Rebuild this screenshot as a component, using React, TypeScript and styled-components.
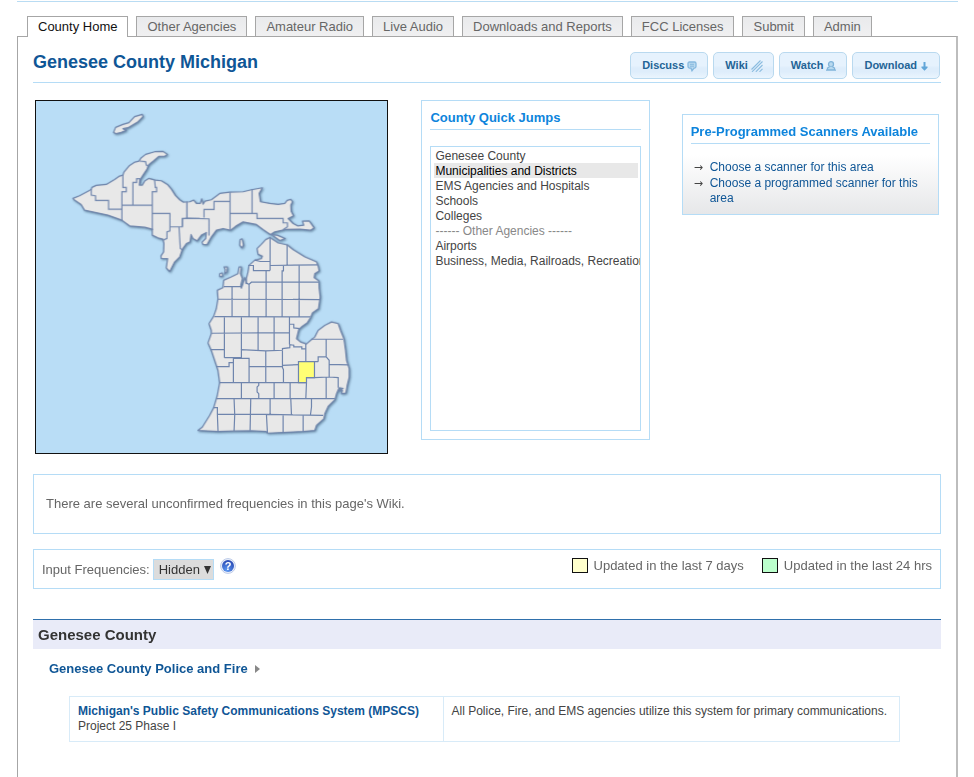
import React from "react";
import styled, { createGlobalStyle } from "styled-components";

const GlobalStyle = createGlobalStyle`
  * { box-sizing: border-box; }
  body {
    margin: 0;
    background: #fff;
    color: #666;
    font: 13px/15px "Liberation Sans", Arial, sans-serif;
  }
  h1, h2, h3, p, ul { margin: 0; padding: 0; }
  a { color: #0f5696; text-decoration: none; }
`;

const Page = styled.div`
  margin: 0 16px 0 17px;
  padding-top: 1px;
`;

const TopRule = styled.div`
  height: 1px;
  background: #b9dcf3;
`;

const Tabs = styled.nav`
  display: flex;
  gap: 8px;
  margin-top: 14px;
  padding-left: 10px;
`;

const Tab = styled.a<{ $active?: boolean }>`
  height: ${(p) => (p.$active ? "21px" : "20px")};
  padding: 2px 10px 0;
  border: 1px solid #a6a6a6;
  border-bottom: 0;
  white-space: nowrap;
  color: ${(p) => (p.$active ? "#111" : "#666")};
  background: ${(p) => (p.$active ? "#fff" : "linear-gradient(#e9eaec, #f0f0f1)")};
  margin-bottom: ${(p) => (p.$active ? "-1px" : "0")};
  position: relative;
  z-index: 1;
`;

const Panel = styled.main`
  min-height: calc(100vh - 36px);
  padding: 15px 15px 34px;
  border: 1px solid #a6a6a6;
  border-right: 2px solid #bdbdbd;
  border-bottom: 0;
`;

const TitleBar = styled.header`
  display: flex;
  justify-content: space-between;
  padding-bottom: 3px;
  border-bottom: 1px solid #b5dcf6;
`;

const Title = styled.h1`
  font-size: 18px;
  line-height: 21px;
  color: #0f5696;
`;

const Actions = styled.div`
  display: flex;
  gap: 5px;
  padding-right: 1px;
`;

const ActionButton = styled.button`
  display: flex;
  align-items: center;
  gap: 3px;
  height: 27px;
  padding: 0 10px 0 11px;
  border: 1px solid #b9d9ef;
  border-radius: 5px;
  background: linear-gradient(#e6f2fd 0 50%, #deedfb 60% 75%, #eaf5fe);
  color: #236496;
  font: bold 11px/13px "Liberation Sans", Arial, sans-serif;

  svg { display: block; margin-top: 1px; }
`;

const Overview = styled.div`
  display: grid;
  grid-template-columns: 353fr 229fr 257fr;
  align-items: start;
  column-gap: 32px;
  margin: 17px 2px 20px;
`;

const MapFrame = styled.div`
  border: 1px solid #111;
  background: #b9ddf6;

  svg { display: block; width: 100%; height: auto; }
`;

const Land = styled.g`
  fill: #e8e8e8;
  stroke: #6f85ab;
  stroke-width: 1.2;
  stroke-linejoin: round;
  filter: drop-shadow(1px 1px 1px rgba(50, 80, 110, 0.6));

  path { vector-effect: non-scaling-stroke; }
`;

const Lines = styled.g`
  fill: none;
  stroke: #6f85ad;
  stroke-width: 1.2;

  path { vector-effect: non-scaling-stroke; }
`;

const Box = styled.section<{ $shaded?: boolean }>`
  border: 1px solid #b5dcf6;
  padding: 8px;
  background: ${(p) => (p.$shaded ? "linear-gradient(#fff 40%, #e6e7e9)" : "#fff")};
`;

const BoxTitle = styled.h2`
  padding: 1px 0 3px;
  border-bottom: 1px solid #b5dcf6;
  font-size: 13px;
  line-height: 16px;
  color: #0d84dc;
`;

const QuickJumps = styled(Box)`
  margin-left: 1px;
`;

const ScannerBox = styled(Box)`
  margin-top: 14px;
`;

const JumpList = styled.select`
  display: block;
  width: 100%;
  height: 285px;
  margin: 16px 0 0;
  padding: 1px 2px 0 3px;
  border: 1px solid #b5dcf6;
  border-radius: 0;
  outline: 0;
  overflow: hidden;
  background: #fff;
  color: #444;
  font: 12px/15px "Liberation Sans", Arial, sans-serif;
  scrollbar-width: none;

  option {
    min-height: 15px;
    padding: 1px 1px 0;
  }
  option:disabled { color: #888; }
  option:checked { background: #e8e8e8 linear-gradient(#e8e8e8, #e8e8e8); color: #000; }
`;

const ArrowList = styled.ul`
  margin-top: 16px;
  list-style: none;
  font-size: 12px;

  li + li { margin-top: 1px; }
  li { display: flex; }
`;

const Arrow = styled.span`
  flex: 0 0 19px;
  padding-left: 3px;
  font-family: "DejaVu Sans", sans-serif;
  font-size: 11px;
  color: #444;
`;

const Notice = styled(Box)`
  padding: 21px 12px 22px;
`;

const Filters = styled(Box)`
  display: flex;
  justify-content: space-between;
  align-items: flex-start;
  margin-top: 15px;
`;

const FilterGroup = styled.div`
  display: flex;
  align-items: center;
  gap: 3px;
  padding-top: 1px;
`;

const SelectWrap = styled.span`
  display: grid;

  > * { grid-area: 1 / 1; }
  svg { justify-self: end; align-self: center; margin-right: 3px; pointer-events: none; }
`;

const FrequencySelect = styled.select`
  appearance: none;
  height: 21px;
  width: 61px;
  padding: 0 0 0 5px;
  border: 1px solid #b5dcf6;
  border-radius: 0;
  background: #dcdcdc;
  color: #333;
  font: 13px/15px "Liberation Sans", Arial, sans-serif;
`;

const HelpLink = styled.a`
  align-self: flex-start;
  margin: -1px 0 0 3px;

  svg { display: block; }
`;

const Legend = styled.ul`
  display: flex;
  gap: 18px;
  list-style: none;

  li { display: flex; align-items: center; gap: 6px; }
`;

const Swatch = styled.span<{ $color: string }>`
  width: 16px;
  height: 15px;
  border: 1px solid #111;
  background: ${(p) => p.$color};
`;

const SectionTitle = styled.h2`
  margin-top: 30px;
  padding: 5px;
  border-top: 1px solid #2f70ac;
  background: #e9ebf8;
  font-size: 15px;
  line-height: 19px;
  color: #333;
`;

const GroupTitle = styled.h3`
  display: flex;
  align-items: center;
  gap: 7px;
  margin: 12px 16px 20px;
  font-size: 13px;
  line-height: 15px;
`;

const SystemTable = styled.table`
  width: calc(100% - 77px);
  margin-left: 36px;
  border-collapse: collapse;

  td {
    padding: 7px 8px;
    border: 1px solid #d8ebf8;
    vertical-align: top;
    font-size: 12px;
    line-height: 15px;
    color: #444;
  }
  td:first-child { width: 45%; }
`;

const DiscussIcon = () => (
  <svg width="10" height="11" viewBox="0 0 10 11" fill="none" stroke="#86b9df">
    <path d="M2.5 1h5Q9 1 9 2.500v3Q9 7 7.500 7.200H7L5 9.800 4 7.200h-1.500Q1 7 1 5.500v-3Q1 1 2.500 1Z" fill="#b9d9ef" strokeWidth="1.300" />
    <path d="M3 3.300h4M3 5.200h4" />
  </svg>
);

const WikiIcon = () => (
  <svg width="12" height="12" viewBox="0 0 12 12" fill="none" stroke="#8bbcdf" strokeWidth="1.100">
    <path d="M.5 9.500 9.500.5M1 11.800 11.500 1.500M4.800 11.800 11.500 5M8.500 11.800l3-3" />
  </svg>
);

const WatchIcon = () => (
  <svg width="10" height="10" viewBox="0 0 10 10" fill="#b9d9ef" stroke="#80b4da" strokeWidth="1.300">
    <circle cx="5" cy="3.200" r="2.500" />
    <path d="M3.500 5.800 1.500 7v2h7V7l-2-1.200M0 9.200h10" />
  </svg>
);

const DownloadIcon = () => (
  <svg width="9" height="9" viewBox="0 0 9 9" fill="none" stroke="#62a6d8" strokeWidth="2">
    <path d="M4.500 0v7" />
    <path d="M1.500 4.500h6v1.200L4.500 8.800l-3-3.100Z" fill="#62a6d8" stroke="none" />
  </svg>
);

const HelpIcon = () => (
  <svg width="16" height="16" viewBox="0 0 16 16">
    <defs>
      <radialGradient id="help" cx=".4" cy=".85" r=".8">
        <stop offset="0" stopColor="#5b98f2" />
        <stop offset="1" stopColor="#2a4cb6" />
      </radialGradient>
    </defs>
    <circle cx="8" cy="8" r="7.400" fill="#eef2fb" stroke="#bccae8" />
    <circle cx="8" cy="8" r="6" fill="url(#help)" />
    <text x="8" y="12" textAnchor="middle" fontSize="11" fontWeight="bold" fill="#fff">?</text>
  </svg>
);

const MichiganMap = () => (
  <svg viewBox="36.500 101 351 352" role="img" aria-label="Map of Michigan counties">
    <Land>
      <g transform="translate(30 95) scale(.333333)">
        <path d="M130 310 150 302 185 283 187 277 200 271 230 268 255 253 270 243 280 240 283 231 300 211 316 201 328 198 335 188 348 178 375 170 400 169 413 178 406 183 387 184 372 197 357 209 352 222 340 240 331 254 329 270 338 270 345 258 357 250 377 255 395 257 413 268 425 282 437 301 450 314 460 321 480 320 492 315 500 325 512 325 516 311 520 327 526 318 545 314 570 295 600 291 640 290 665 284 698 278 688 295 692 320 720 325 745 328 765 325 772 316 783 313 788 320 783 330 784 348 791 362 775 370 790 385 803 392 822 390 818 378 838 377 853 398 842 405 810 402 765 403 735 410 722 418 700 403 680 388 640 380 618 393 602 405 580 400 560 405 545 425 532 448 520 448 517 441 528 430 530 412 515 420 502 437 490 430 484 418 481 440 470 445 458 462 450 485 435 500 420 529 410 518 414 490 395 490 394 482 402 470 403 445 400 432 385 428 368 420 368 402 345 396 300 392 277 375 235 360 165 345 155 328 135 315Z" />
      </g>
      <g transform="translate(60 100) scale(.333333)">
        <path d="M162 97 168 82 190 73 208 68 225 50 248 43 250 50 235 65 205 83 190 86 200 91 185 97 170 101Z" />
      </g>
      <g transform="translate(180 160) scale(.333333)">
        <path d="M181 238 187 236 191 255 186 263 180 255ZM276 224 292 225 316 235 300 241Z" />
      </g>
      <g transform="translate(190 230) scale(.333333)">
        <path d="M103 110 113 110 112 124 105 131 107 118ZM90 130 98 128 98 138 90 139Z" />
        <path d="M241 22 265 38 292 44 310 58 345 80 380 95 385 108 388 122 375 130 373 142 387 152 388 175 391 200 386 235 368 248 362 262 352 278 335 290 327 297 320 325 332 335 350 341 365 328 375 320 385 300 405 285 425 275 445 280 452 300 462 325 467 360 470 390 478 415 478 440 472 465 468 488 455 490 458 480 445 482 460 474 448 472 440 490 435 508 415 528 405 550 402 565 380 585 375 600 340 603 280 606 233 608 230 603 185 601 133 602 85 603 25 600 38 590 60 555 72 532 83 495 90 457 85 420 80 405 65 360 55 338 65 310 65 300 58 280 72 258 80 235 85 205 83 180 100 172 102 150 125 140 145 130 148 110 155 110 152 130 158 145 153 165 155 174 160 160 165 142 170 160 170 145 175 125 178 105 195 90 215 85 218 78 205 72 202 55 215 42 228 28Z" />
      </g>
    </Land>
    <Lines>
      <g transform="translate(60 100) scale(.333333)">
        <path d="M95 268V285L108 287V301H147V327H187M190 226V262H200V275H187V361M187 315H278M220 315V247H231V236H242V250M240 183 258 185 260 195 268 198M285 240 287 262H291V275H278V390M278 340H331V392L322 395V415L310 420M331 380H368V355H420M331 340V380M382 305V355M358 380 362 445 370 450" />
      </g>
      <g transform="translate(180 160) scale(.333333)">
        <path d="M22 125V172M8 199V176L22 174 88 176V226M73 172V148H103V124H151M151 97V210M151 160H232V175H310V188H323V200L310 208M217 88V160" />
      </g>
      <g transform="translate(190 230) scale(.333333)">
        <path d="M241 22V121M292 44V106M241 106 384 104M195 90 212 94H241M176 106H191V121H241M229 121V258M281 106V122H277V258M328 106V258M168 158 178 162 185 156H387M178 162V258M102 169H155M127 169V258M85 207 391 208M74 259 362 260M104 260V382M155 260V358M205 260V307M253 260V307M299 260V343M299 282H312V293L330 295M65 309 299 307M205 307V360M253 307V360" />
        <path d="M63 358H104M104 382H155V358L228 362 278 360V355L300 352V343L312 345V350H336V356H348V341M348 341V395M365 327H460M409 327V380M385 394V380H409L418 390V442M350 394H385M418 402 475 404M228 362V457M131 384V457M131 384H178V457M80 409H118V397H131M178 409 278 409M278 360V412L281 418V457M278 405 326 403M350 442H374L418 440 445 442V472M409 442V505M350 457 348 505M90 457H350M155 457V505M207 457V465L202 470V485L207 490V505M253 457V505M301 457V505M80 505H435M133 505 135 553 133 602M183 505 181 601M241 505V553M303 505 305 553M365 505V530L362 553M85 552 230 552 400 555M72 532H83V552L85 603M230 552 233 608M280 553V606M340 553V603" />
        <path d="M326 394H374V442H350V457H326Z" fill="#ffff75" />
      </g>
    </Lines>
  </svg>
);

const tabs = [
  "County Home",
  "Other Agencies",
  "Amateur Radio",
  "Live Audio",
  "Downloads and Reports",
  "FCC Licenses",
  "Submit",
  "Admin",
];

export default function App() {
  return (
    <>
      <GlobalStyle />
      <Page>
        <TopRule />
        <Tabs>
          {tabs.map((name, i) => (
            <Tab key={name} href="#" $active={i === 0}>{name}</Tab>
          ))}
        </Tabs>
        <Panel>
          <TitleBar>
            <Title>Genesee County Michigan</Title>
            <Actions>
              <ActionButton>Discuss <DiscussIcon /></ActionButton>
              <ActionButton>Wiki <WikiIcon /></ActionButton>
              <ActionButton>Watch <WatchIcon /></ActionButton>
              <ActionButton>Download <DownloadIcon /></ActionButton>
            </Actions>
          </TitleBar>

          <Overview>
            <MapFrame><MichiganMap /></MapFrame>
            <QuickJumps>
              <BoxTitle id="jumps">County Quick Jumps</BoxTitle>
              <JumpList size={18} aria-labelledby="jumps" defaultValue="municipalities">
                <option>Genesee County</option>
                <option value="municipalities">Municipalities and Districts</option>
                <option>EMS Agencies and Hospitals</option>
                <option>Schools</option>
                <option>Colleges</option>
                <option disabled>------ Other Agencies ------</option>
                <option>Airports</option>
                <option>Business, Media, Railroads, Recreation</option>
              </JumpList>
            </QuickJumps>
            <ScannerBox $shaded>
              <BoxTitle>Pre-Programmed Scanners Available</BoxTitle>
              <ArrowList>
                <li><Arrow>→</Arrow><a href="#">Choose a scanner for this area</a></li>
                <li><Arrow>→</Arrow><a href="#">Choose a programmed scanner for this area</a></li>
              </ArrowList>
            </ScannerBox>
          </Overview>

          <Notice>
            <p>There are several unconfirmed frequencies in this page's Wiki.</p>
          </Notice>

          <Filters>
            <FilterGroup>
              <label htmlFor="input-freq">Input Frequencies:</label>
              <SelectWrap>
                <FrequencySelect id="input-freq">
                  <option>Hidden</option>
                  <option>Shown</option>
                </FrequencySelect>
                <svg width="7" height="8" viewBox="0 0 7 8"><path d="M0 0h7L3.500 8Z" fill="#333" /></svg>
              </SelectWrap>
              <HelpLink href="#" aria-label="Help"><HelpIcon /></HelpLink>
            </FilterGroup>
            <Legend>
              <li><Swatch $color="#ffffcc" />Updated in the last 7 days</li>
              <li><Swatch $color="#bbffcc" />Updated in the last 24 hrs</li>
            </Legend>
          </Filters>

          <SectionTitle>Genesee County</SectionTitle>
          <GroupTitle>
            <a href="#">Genesee County Police and Fire</a>
            <svg width="5" height="8" viewBox="0 0 5 8"><path d="M0 0 5 4 0 8Z" fill="#888" /></svg>
          </GroupTitle>
          <SystemTable>
            <tbody>
              <tr>
                <td>
                  <a href="#"><b>Michigan's Public Safety Communications System (MPSCS)</b></a>
                  <br />
                  Project 25 Phase I
                </td>
                <td>All Police, Fire, and EMS agencies utilize this system for primary communications.</td>
              </tr>
            </tbody>
          </SystemTable>
        </Panel>
      </Page>
    </>
  );
}
